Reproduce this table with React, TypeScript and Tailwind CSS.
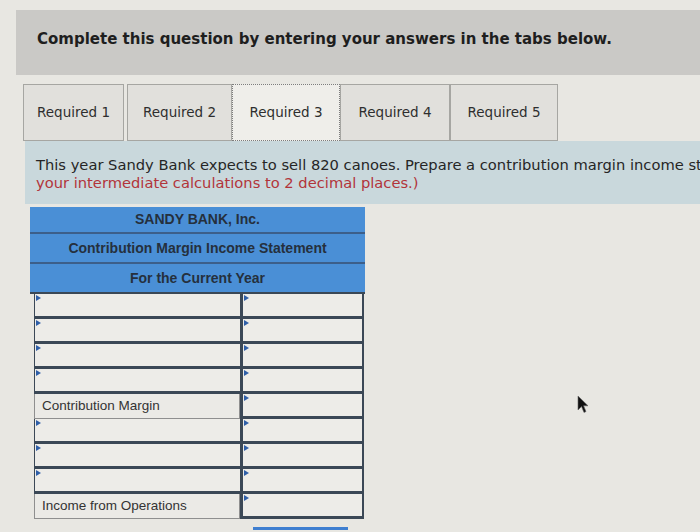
import React from 'react';

const TABS = [
  { label: 'Required 1', cls: 'w-[101px]', active: false },
  { label: 'Required 2', cls: 'w-[105px] ml-[3px]', active: false },
  { label: 'Required 3', cls: 'w-[108px]', active: true },
  { label: 'Required 4', cls: 'w-[110px]', active: false },
  { label: 'Required 5', cls: 'w-[108px]', active: false },
];

// left cell label, or null for an input
const ROWS: (string | null)[] = [
  null,
  null,
  null,
  null,
  'Contribution Margin',
  null,
  null,
  null,
  'Income from Operations',
];

function Marker() {
  return (
    <span className="absolute left-[1px] top-[1px] w-0 h-0 border-y-[3px] border-y-transparent border-l-[5px] border-l-[#2f5fa8]" />
  );
}

function InputCell({ right }: { right?: boolean }) {
  return (
    <div
      className={
        right
          ? 'relative h-[25px] bg-[#edece8] border-l-[3px] border-r-2 border-b-[3px] border-[#3b4856]'
          : 'relative h-[25px] bg-[#edece8] border-l border-b-[3px] border-[#3b4856]'
      }
    >
      <Marker />
    </div>
  );
}

export default function App() {
  return (
    <div className="relative w-[700px] h-[532px] overflow-hidden bg-[#e8e7e2] font-['DejaVu_Sans',sans-serif]">
      <div className="pt-[10px] pl-[16px]">
        <div className="h-[65px] bg-[#cac9c6] flex items-center pl-[21px] pb-[6px]">
          <p className="text-[15px] font-bold text-[#1e1e1e]">
            Complete this question by entering your answers in the tabs below.
          </p>
        </div>
      </div>

      <div className="flex ml-[23px] mt-[9px] h-[57px]">
        {TABS.map((t) => (
          <div
            key={t.label}
            className={`${t.cls} flex items-center justify-center text-[13.5px] text-[#2e2e2e] ${
              t.active
                ? 'bg-[#efeeea] border border-dotted border-[#7d7d7d]'
                : 'bg-[#e1e0dc] border border-[#a6a6a2]'
            }`}
          >
            <span className="-mt-[1px]">{t.label}</span>
          </div>
        ))}
      </div>

      <div className="ml-[25px] h-[63px] bg-[#c9d8dc] pl-[11px] pt-[15px] text-[14.7px] leading-[18px] whitespace-nowrap">
        <p className="text-[#262626]">
          This year Sandy Bank expects to sell 820 canoes. Prepare a contribution margin income statement. (Round
        </p>
        <p className="text-[#b2343a]">your intermediate calculations to 2 decimal places.)</p>
      </div>

      <div className="ml-[30px] mt-[3px] w-[335px] font-['Liberation_Sans',Arial,sans-serif]">
        <div className="bg-[#4a8fd6] text-[14px] font-bold text-[#25303d] text-center">
          <div className="h-[27px] flex items-center justify-center border-b-2 border-[#3c5f8a]">SANDY BANK, Inc.</div>
          <div className="h-[30px] flex items-center justify-center border-b-2 border-[#3c5f8a]">
            Contribution Margin Income Statement
          </div>
          <div className="h-[28px] flex items-center justify-center">For the Current Year</div>
        </div>

        <div className="grid grid-cols-[206px_124px] pl-[4px] border-t-2 border-[#3b4856]">
          {ROWS.map((label, i) => (
            <React.Fragment key={i}>
              {label ? (
                <div className="h-[25px] bg-[#ebeae6] border border-t-0 border-[#8f8f8f] flex items-center pl-[7px] text-[13.5px] text-[#333]">
                  {label}
                </div>
              ) : (
                <InputCell />
              )}
              <InputCell right />
            </React.Fragment>
          ))}
        </div>
      </div>

      <div className="ml-[253px] mt-[8px] w-[95px] h-[3px] bg-[#3f7fd0]" />

      <svg className="absolute left-[576px] top-[395px]" width="14" height="20" viewBox="0 0 14 20">
        <path d="M2 1 L2 15 L5.5 11.5 L8 17.5 L10 16.5 L7.6 10.8 L12 10.8 Z" fill="#111" stroke="#666" strokeWidth="0.6" />
      </svg>
    </div>
  );
}
